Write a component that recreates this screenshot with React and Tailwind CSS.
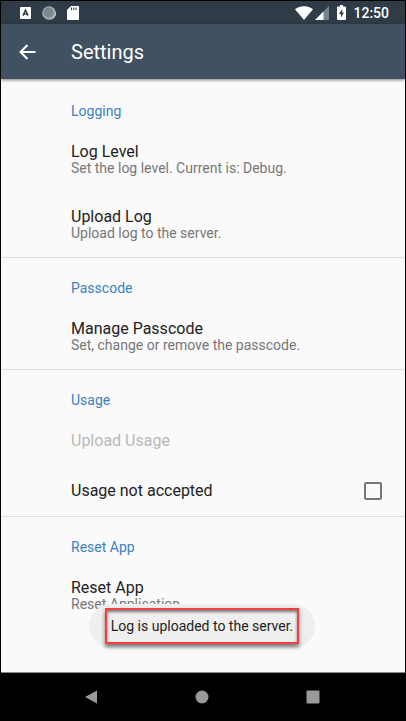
function StatusBar() {
  return (
    <div className="flex h-[23px] items-center justify-between bg-[#2f3c47] pr-4 pl-[19px] text-white">
      <div className="flex items-center gap-[11px]">
        <svg width="11" height="12" viewBox="0 0 11 12" aria-hidden="true">
          <rect width="11" height="12" rx="1" fill="#fff" />
          <path d="M3 8.600 5.500 3 8 8.600M3.800 7h3.400" fill="none" stroke="#2f3c47" strokeWidth="1.500" />
        </svg>
        <svg width="14" height="14" viewBox="0 0 14 14" aria-hidden="true">
          <circle cx="7" cy="7" r="6.800" fill="#a4abb0" />
          <path d="M12.600 3.800A6.600 6.600 0 0 1 6 13.600 6.300 6.300 0 0 0 12.600 3.800Z" fill="#fff" />
          <circle cx="6.500" cy="6.500" r="5" fill="#7d868d" />
        </svg>
        <svg width="12" height="14" viewBox="0 0 12 14" aria-hidden="true">
          <path d="M4 0h7a1 1 0 0 1 1 1v12a1 1 0 0 1-1 1H1a1 1 0 0 1-1-1V4Z" fill="#fff" />
          <path d="M4.500 1.500v2.500M6.800 1.500v2.500M9.100 1.500v2.500" stroke="#2f3c47" strokeWidth="1.100" />
        </svg>
      </div>
      <div className="flex items-center">
        <svg width="18" height="14" viewBox="0 0 18 14" aria-hidden="true">
          <path d="M0 3.200C5-.9 13-.9 18 3.200L9 14Z" fill="#fff" />
        </svg>
        <svg className="ml-0.5" width="14" height="14" viewBox="0 0 14 14" aria-hidden="true">
          <path d="M14 0v14H0Z" fill="#78828a" />
          <path d="M8.500 5.500V14H0Z" fill="#fff" />
        </svg>
        <svg className="ml-2" width="9" height="15" viewBox="0 0 9 15" aria-hidden="true">
          <path d="M3 0h3v1.500h2a1 1 0 0 1 1 1V14a1 1 0 0 1-1 1H1a1 1 0 0 1-1-1V2.500a1 1 0 0 1 1-1h2Z" fill="#fff" />
          <path d="M5.200 4 2 9h2v3.500L7 7.500H5.200Z" fill="#2f3c47" />
        </svg>
        <span className="ml-[7px] text-[14px] leading-5 font-medium">12:50</span>
      </div>
    </div>
  );
}

function Section({ title, last, children }) {
  return (
    <section className={last ? "" : "border-b border-[#dedede]"}>
      <h2 className="h-[46px] pt-5 pl-[70px] text-[14px] leading-5 text-[#3d80bf]">{title}</h2>
      {children}
    </section>
  );
}

function Item({ title, summary, disabled }) {
  return (
    <button
      type="button"
      disabled={disabled}
      className="block w-full py-4 pr-4 pl-[70px] text-left text-[#222] disabled:text-[#b9b9b9]"
    >
      <span className="block text-[16px] leading-[17px]">{title}</span>
      {summary && <span className="block text-[14px] leading-4 text-[#777]">{summary}</span>}
    </button>
  );
}

export default function App() {
  return (
    <div className="flex min-h-screen flex-col border border-black bg-[#fafafa] font-['Roboto',sans-serif]">
      <StatusBar />
      <header className="relative flex h-[55px] items-center bg-[#415161] text-white shadow-[0_1px_3px_rgba(0,0,0,0.5)]">
        <button type="button" aria-label="Back" className="flex w-[70px] items-center pl-[18px]">
          <svg width="17" height="16" viewBox="0 0 17 16" fill="none" stroke="#fff" strokeWidth="2" aria-hidden="true">
            <path d="M16.500 8H2M8.500 1 1.500 8l7 7" />
          </svg>
        </button>
        <h1 className="text-[20px] leading-6">Settings</h1>
      </header>
      <main className="relative flex-1 pt-0.5">
        <Section title="Logging">
          <Item title="Log Level" summary="Set the log level. Current is: Debug." />
          <Item title="Upload Log" summary="Upload log to the server." />
        </Section>
        <Section title="Passcode">
          <Item title="Manage Passcode" summary="Set, change or remove the passcode." />
        </Section>
        <Section title="Usage">
          <Item title="Upload Usage" disabled />
          <label className="flex h-[51px] items-center justify-between pr-[23px] pl-[70px] text-[16px] leading-[17px] text-[#222]">
            Usage not accepted
            <input
              type="checkbox"
              className="size-[18px] appearance-none rounded-xs border-2 border-[#777] checked:bg-[#777]"
            />
          </label>
        </Section>
        <Section title="Reset App" last>
          <Item title="Reset App" summary="Reset Application" />
        </Section>
        <div className="absolute inset-x-0 bottom-6 flex justify-center pr-0.5">
          <div role="status" className="flex h-11 items-center rounded-full bg-[#efefef] px-4">
            <span className="border-2 border-[#f83f3f] px-1 py-2 text-[14px] leading-4 whitespace-nowrap text-[#222] shadow-[0_3px_4px_rgba(0,0,0,0.5),inset_0_2px_3px_rgba(0,0,0,0.5)]">
              Log is uploaded to the server.
            </span>
          </div>
        </div>
      </main>
      <nav className="flex h-12 items-center justify-around border-t border-[#888] bg-black pr-9 pl-[34px]">
        <button type="button" aria-label="Back">
          <svg width="14" height="14" viewBox="0 0 14 14" fill="#999" aria-hidden="true">
            <path d="M13 .5v13L1 7Z" />
          </svg>
        </button>
        <button type="button" aria-label="Home">
          <svg width="14" height="14" viewBox="0 0 14 14" fill="#999" aria-hidden="true">
            <circle cx="7" cy="7" r="6.500" />
          </svg>
        </button>
        <button type="button" aria-label="Recent apps">
          <svg width="14" height="14" viewBox="0 0 14 14" fill="#999" aria-hidden="true">
            <rect x=".5" y=".5" width="13" height="13" rx="1" />
          </svg>
        </button>
      </nav>
    </div>
  );
}
